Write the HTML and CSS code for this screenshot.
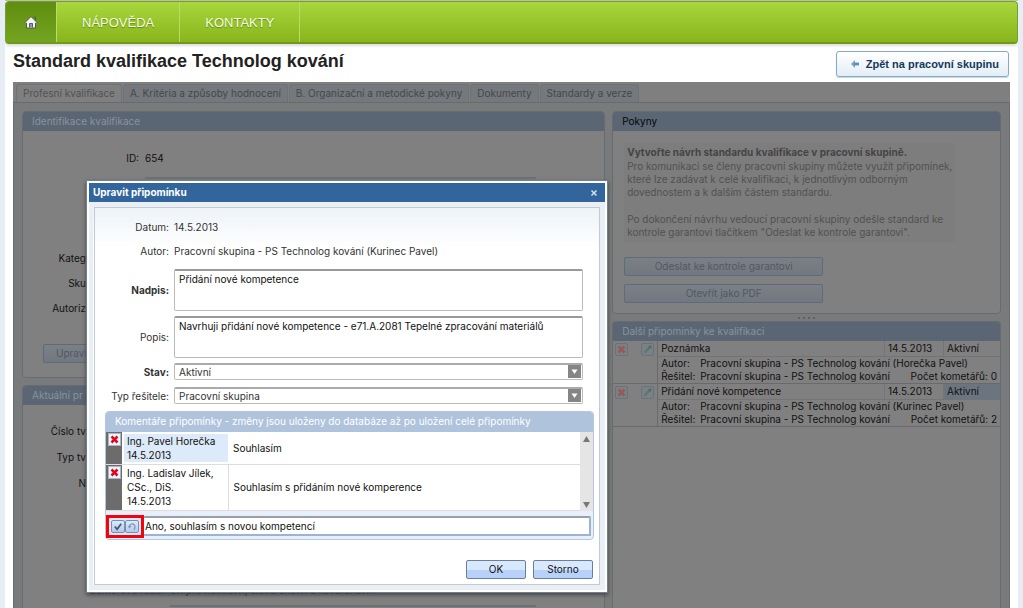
FILE: index.html
```html
<!DOCTYPE html>
<html lang="cs">
<head>
<meta charset="utf-8">
<title>Standard kvalifikace Technolog kování</title>
<link rel="stylesheet" href="styles.css">
</head>
<body>
<div class="page">
  <nav class="nav">
    <a class="home" href="#" aria-label="Domů">
      <svg width="14" height="14" viewBox="0 0 14 14"><path d="M1 7.500 7 1.500l6 6-1 1-.5-.4V13h-9V8.100L2 8.500z" fill="#f3f3f6" stroke="#4d5a4a"/><path d="M10 2h1.500v3" fill="none" stroke="#4d5a4a"/><path d="M5.500 12.500V8.500h3v4" fill="#9298a8" stroke="#565b69"/></svg>
    </a>
    <a class="nav-link" href="#">NÁPOVĚDA</a>
    <a class="nav-link" href="#">KONTAKTY</a>
  </nav>
  <header class="title-row">
    <h1>Standard kvalifikace Technolog kování</h1>
    <button class="back" type="button">
      <svg width="9" height="8" viewBox="0 0 9 8"><path d="M0 4 4 0v2.500h4v3H4V8z" fill="#7ba0c8"/><path d="M3 4h5" stroke="#4a75a6"/></svg>
      Zpět na pracovní skupinu
    </button>
  </header>
  <main class="workspace">
    <div class="tabs">
      <button class="tab active" type="button">Profesní kvalifikace</button>
      <button class="tab" type="button">A. Kritéria a způsoby hodnocení</button>
      <button class="tab" type="button">B. Organizační a metodické pokyny</button>
      <button class="tab" type="button">Dokumenty</button>
      <button class="tab" type="button">Standardy a verze</button>
    </div>
    <div class="columns">
      <div class="left-col">
        <section class="panel ident">
          <h2>Identifikace kvalifikace</h2>
          <div class="ident-id"><span>ID:</span><span>654</span></div>
          <div class="ident-line"></div>
          <div class="side-labels">
            <span>Kateg</span>
            <span>Sku</span>
            <span>Autoriz</span>
          </div>
          <button class="dim-btn edit" type="button">Upravi</button>
        </section>
        <section class="panel work">
          <h2>Aktuální pr</h2>
          <div class="side-labels work-labels">
            <span>Číslo tv</span>
            <span>Typ tv</span>
            <span>N</span>
          </div>
          <div class="sector"><span>Sektorová rada:</span><span>SR pro hutnictví, slévárenství a kovárenství</span></div>
          <div class="sector-line"></div>
        </section>
      </div>
      <div class="right-col">
        <section class="panel guide">
          <h2 class="dark">Pokyny</h2>
          <div class="guide-text">
            <p><strong>Vytvořte návrh standardu kvalifikace v pracovní skupině.</strong></p>
            <p>Pro komunikaci se členy pracovní skupiny můžete využít připomínek,<br>které lze zadávat k celé kvalifikaci, k jednotlivým odborným<br>dovednostem a k dalším částem standardu.</p>
            <p>Po dokončení návrhu vedoucí pracovní skupiny odešle standard ke<br>kontrole garantovi tlačítkem "Odeslat ke kontrole garantovi".</p>
          </div>
          <div class="guide-actions">
            <button class="dim-btn" type="button">Odeslat ke kontrole garantovi</button>
            <button class="dim-btn" type="button">Otevřít jako PDF</button>
          </div>
        </section>
        <div class="grip"><i></i><i></i><i></i><i></i></div>
        <section class="panel notes">
          <h2>Další připomínky ke kvalifikaci</h2>
          <article class="note">
            <div class="note-tools">
              <button class="mini" type="button" aria-label="Smazat"><svg width="11" height="11" viewBox="0 0 11 11"><path d="m2.500 2.500 6 6m0-6-6 6" stroke="#985858" stroke-width="2.500"/></svg></button>
              <button class="mini" type="button" aria-label="Upravit"><svg width="11" height="11" viewBox="0 0 11 11"><path d="m2.500 8.500 5-5" stroke="#4f7b69" stroke-width="2"/><path d="m7 4 2-2" stroke="#4c6b76" stroke-width="2.500"/></svg></button>
            </div>
            <div class="note-body">
              <div class="note-head"><span>Poznámka</span><span class="date">14.5.2013</span><span class="state">Aktivní</span></div>
              <div class="note-line"><span class="key">Autor:</span><span>Pracovní skupina - PS Technolog kování (Horečka Pavel)</span></div>
              <div class="note-line"><span class="key">Řešitel:</span><span>Pracovní skupina - PS Technolog kování</span><span class="count">Počet kometářů: 0</span></div>
            </div>
          </article>
          <article class="note">
            <div class="note-tools">
              <button class="mini" type="button" aria-label="Smazat"><svg width="11" height="11" viewBox="0 0 11 11"><path d="m2.500 2.500 6 6m0-6-6 6" stroke="#985858" stroke-width="2.500"/></svg></button>
              <button class="mini" type="button" aria-label="Upravit"><svg width="11" height="11" viewBox="0 0 11 11"><path d="m2.500 8.500 5-5" stroke="#4f7b69" stroke-width="2"/><path d="m7 4 2-2" stroke="#4c6b76" stroke-width="2.500"/></svg></button>
            </div>
            <div class="note-body">
              <div class="note-head"><span>Přidání nové kompetence</span><span class="date">14.5.2013</span><span class="state selected">Aktivní</span></div>
              <div class="note-line"><span class="key">Autor:</span><span>Pracovní skupina - PS Technolog kování (Kurinec Pavel)</span></div>
              <div class="note-line"><span class="key">Řešitel:</span><span>Pracovní skupina - PS Technolog kování</span><span class="count">Počet kometářů: 2</span></div>
            </div>
          </article>
        </section>
      </div>
    </div>
  </main>
</div>

<div class="dialog" role="dialog" aria-labelledby="dialog-title">
  <div class="dialog-head">
    <h2 id="dialog-title">Upravit připomínku</h2>
    <button class="close" type="button" aria-label="Zavřít"><svg width="8" height="8" viewBox="0 0 8 8"><path d="m1.500 1.500 5 5m0-5-5 5" stroke="#d5e2ef" stroke-width="1.500"/></svg></button>
  </div>
  <form class="dialog-body">
    <div class="facts">
      <span>Datum:</span><span>14.5.2013</span>
      <span>Autor:</span><span>Pracovní skupina - PS Technolog kování (Kurinec Pavel)</span>
    </div>
    <div class="fields">
      <label class="bold" for="subject">Nadpis:</label><textarea id="subject">Přidání nové kompetence</textarea>
      <label for="desc">Popis:</label><textarea id="desc">Navrhuji přidání nové kompetence - e71.A.2081 Tepelné zpracování materiálů</textarea>
      <label class="bold" for="state">Stav:</label>
      <div class="drop"><select id="state"><option>Aktivní</option></select><svg class="arrow" width="13" height="13" viewBox="0 0 13 13"><path d="M0 0h13v13H0z" fill="#858585"/><path d="M3.500 4.500h6L6.500 9z" fill="#fff"/></svg></div>
      <label for="solver">Typ řešitele:</label>
      <div class="drop"><select id="solver"><option>Pracovní skupina</option></select><svg class="arrow" width="13" height="13" viewBox="0 0 13 13"><path d="M0 0h13v13H0z" fill="#858585"/><path d="M3.500 4.500h6L6.500 9z" fill="#fff"/></svg></div>
    </div>
    <section class="comments">
      <h3>Komentáře připomínky - změny jsou uloženy do databáze až po uložení celé připomínky</h3>
      <div class="comment-view">
        <table class="comment-table">
          <tr class="first">
            <td class="del"><button type="button" aria-label="Smazat komentář"><svg width="11" height="11" viewBox="0 0 11 11"><path d="m2.500 2.500 6 6m0-6-6 6" stroke="#e1061c" stroke-width="2.500"/></svg></button></td>
            <td class="who"><div class="hot">Ing. Pavel Horečka<br>14.5.2013</div></td>
            <td class="said">Souhlasím</td>
          </tr>
          <tr class="second">
            <td class="del"><button type="button" aria-label="Smazat komentář"><svg width="11" height="11" viewBox="0 0 11 11"><path d="m2.500 2.500 6 6m0-6-6 6" stroke="#e1061c" stroke-width="2.500"/></svg></button></td>
            <td class="who ruled"><div>Ing. Ladislav Jílek,<br>CSc., DiS.<br>14.5.2013</div></td>
            <td class="said">Souhlasím s přidáním nové komperence</td>
          </tr>
        </table>
        <div class="scroll">
          <svg width="7" height="6" viewBox="0 0 7 6"><path d="M0 6 3.500 0 7 6z" fill="#777"/></svg>
          <svg width="7" height="6" viewBox="0 0 7 6"><path d="M0 0h7L3.500 6z" fill="#777"/></svg>
        </div>
      </div>
      <div class="entry">
        <div class="entry-tools">
          <button type="button" aria-label="Potvrdit"><svg width="10" height="11" viewBox="0 0 11 11"><path d="m2 5.500 2.500 3 4.500-6" fill="none" stroke="#46586f" stroke-width="2"/></svg></button>
          <button type="button" aria-label="Zpět"><svg width="10" height="11" viewBox="0 0 11 11"><path d="M2.500 6C3 3 5 2 7 3s2.500 4 .5 6" fill="none" stroke="#8197b5" stroke-width="1.500"/><path d="M1 5h4L2.500 8z" fill="#8197b5"/></svg></button>
        </div>
        <input class="entry-input" type="text" aria-label="Komentář" value="Ano, souhlasím s novou kompetencí">
      </div>
    </section>
    <div class="actions">
      <button type="button">OK</button>
      <button type="button">Storno</button>
    </div>
  </form>
</div>
</body>
</html>
```
FILE: styles.css
```css
* { box-sizing: border-box; }
html, body { height: 100%; }
body {
  margin: 0;
  overflow: hidden;
  background: #e7edf5;
  font: 10px/13px Inter, "DejaVu Sans", sans-serif;
  color: #111;
}
h1, h2, h3, p { margin: 0; }
button, input, textarea, select { font: inherit; color: inherit; margin: 0; }
svg { display: block; }

.page {
  display: flex;
  flex-direction: column;
  height: 100vh;
  margin: 0 5px;
  background: #fff;
  border-top: 1px solid #b9c0ad;
  overflow: hidden;
}
.nav {
  flex: none;
  display: flex;
  height: 43px;
  border: 1px solid #789f27;
  border-bottom: 2px solid #70981c;
  border-radius: 4px;
  background: linear-gradient(#a9d63c, #88b51c);
  box-shadow: 0 2px 3px #ddd;
  overflow: hidden;
}
.nav a {
  display: flex;
  align-items: center;
  border-right: 1px solid #b9dc62;
  color: #f6ffe0;
  text-decoration: none;
}
.nav .home { width: 51px; padding-left: 18px; background: linear-gradient(#5f8d10, #75a422); }
.nav-link { padding: 0 25px; font: 13px "Liberation Sans", sans-serif; text-shadow: 0 1px 1px #64861d; }

.title-row {
  flex: none;
  display: flex;
  justify-content: space-between;
  height: 38px;
  padding: 7px 9px 0 8px;
}
h1 { font: bold 18px/20px "Liberation Sans", sans-serif; color: #222; }
.back {
  display: flex;
  align-items: center;
  gap: 6px;
  height: 26px;
  padding: 0 9px 0 14px;
  border: 1px solid #86a9c6;
  border-radius: 3px;
  background: linear-gradient(#fff, #e3eef7);
  color: #16395b;
  font: bold 11px "Liberation Sans", sans-serif;
  box-shadow: 0 1px 1px #c8d4de;
}

.workspace {
  flex: 1;
  display: flex;
  flex-direction: column;
  min-height: 0;
  margin: 0 8px;
  background: #7f7f7f;
}
.tabs { flex: none; display: flex; gap: 1px; height: 21px; padding: 2px 3px 0; border-bottom: 1px solid #676b6f; }
.tab {
  padding: 0 6px;
  border: 1px solid #707376;
  border-bottom: 0;
  border-radius: 3px 3px 0 0;
  background: #75787c;
  color: #44484d;
}
.tab.active { background: #7f7f7f; color: #505356; }
.columns {
  flex: 1;
  display: grid;
  grid-template-columns: 3fr 2fr;
  gap: 7px;
  min-height: 0;
  padding: 8px 8px 0;
  background: #797a7b;
  border: solid #6c6e70;
  border-width: 0 1px;
}
.left-col, .right-col { display: flex; flex-direction: column; min-width: 0; }
.left-col { gap: 7px; }
.panel {
  border: 1px solid #686c70;
  border-radius: 4px;
  background: #808080;
  color: #111;
}
.panel h2 {
  height: 19px;
  padding: 3px 9px;
  border-radius: 3px 3px 0 0;
  background: #5a6674;
  color: #8a929b;
  font-size: 10px;
  font-weight: 400;
  line-height: 13px;
}
.panel h2.dark { color: #050505; }
.ident { flex: none; height: 267px; }
.ident-id { display: grid; grid-template-columns: 116px 1fr; gap: 6px; margin-top: 21px; }
.ident-id span:first-child { text-align: right; }
.ident-line { margin: 12px 68px 0 122px; }
.ident-line, .sector-line { border-top: 2px solid #6d7173; }
.side-labels { display: grid; gap: 12px; width: 63px; margin-top: 73px; text-align: right; }
.dim-btn {
  height: 19px;
  border: 1px solid #5c6b7d;
  border-radius: 2px;
  background: linear-gradient(#7b8086, #72787f);
  color: #4f5965;
}
.edit { display: block; width: 120px; margin: 29px 0 0 20px; padding-left: 12px; text-align: left; }
.work { flex: 1; border-bottom: 0; border-radius: 4px 4px 0 0; overflow: hidden; }
.work-labels { margin-top: 20px; gap: 13px; }
.sector { display: grid; grid-template-columns: 141px 1fr; gap: 6px; margin-top: 94px; }
.sector span:first-child { text-align: right; }
.sector-line { margin: 8px 68px 0 147px; }

.guide { height: 203px; flex: none; }
.guide-text { margin: 12px 45px 0 11px; padding: 3px 3px; background: #7d7d7d; color: #515151; white-space: nowrap; }
.guide-text p + p { margin-top: 1px; }
.guide-text p + p + p { margin-top: 14px; }
.guide-text strong { color: #444; }
.guide-actions { display: flex; flex-direction: column; align-items: flex-start; gap: 8px; margin: 15px 0 0 11px; }
.guide-actions .dim-btn { width: 199px; }
.grip { display: flex; justify-content: center; align-items: center; gap: 3px; height: 7px; }
.grip i { width: 2px; height: 2px; background: #606060; }
.notes { flex: 1; border-bottom: 0; border-radius: 4px 4px 0 0; }
.note { display: grid; grid-template-columns: 45px 1fr; height: 43px; border-bottom: 1px solid #686a6c; }
.note-tools { display: flex; justify-content: space-between; align-items: flex-start; padding: 2px 3px 0 2px; border-right: 1px solid #686a6c; }
.mini { padding: 0; border: 1px solid #68727c; border-radius: 2px; background: #7b8085; }
.note-head { display: grid; grid-template-columns: 1fr 59px 57px; height: 16px; border-bottom: 1px solid #727476; line-height: 15px; }
.note-head span { padding-left: 3px; border-left: 1px solid #727476; }
.note-head span:first-child { border-left: 0; }
.note-head .selected { background: #6b7580; }
.note-line { display: flex; padding: 0 3px; white-space: nowrap; }
.note-line .key { width: 39px; }
.note-line .count { margin-left: auto; }

.dialog {
  position: absolute;
  left: 86px;
  top: 180px;
  width: 522px;
  padding: 2px;
  border: 1px solid #6f7f8e;
  background: #fff;
  box-shadow: 0 2px 4px #454545;
}
.dialog-head {
  display: flex;
  align-items: center;
  justify-content: space-between;
  height: 19px;
  padding: 0 5px 0 4px;
  background: #31659c;
  color: #fff;
}
.dialog-head h2 { font-size: 10px; font-weight: bold; line-height: 13px; }
.close { padding: 2px; border: 0; background: transparent; }
.dialog-body {
  padding: 10px 6px 4px 12px;
  border: solid #e9eff4;
  border-width: 6px 5px 5px 4px;
  outline: 1px solid #c2cbd1;
  outline-offset: -6px;
  background: linear-gradient(#eef3f7, #fff 40px);
  color: #333;
}
.facts, .fields { display: grid; grid-template-columns: 64px 1fr; column-gap: 5px; }
.facts { row-gap: 5px; line-height: 19px; }
.facts span:nth-child(odd) { text-align: right; }
.fields {
  row-gap: 5px;
  align-items: center;
  margin-top: 8px;
  padding-right: 11px;
}
.fields > label { text-align: right; white-space: nowrap; }
.fields .bold { font-weight: bold; }
.fields textarea {
  display: block;
  width: 100%;
  height: 42px;
  padding: 2px 4px;
  border: 1px solid #bbb;
  border-top: 2px solid #999;
  border-radius: 2px;
  background: #fff;
  color: #111;
  resize: none;
  overflow: hidden;
}
.drop { position: relative; height: 19px; padding-bottom: 2px; }
.drop select {
  appearance: none;
  display: block;
  width: 100%;
  height: 17px;
  padding: 0 4px;
  border: 1px solid #bbb;
  border-top: 2px solid #aaa;
  border-radius: 2px;
  background: #fff;
}
.arrow { position: absolute; right: 2px; top: 2px; }
.comments { margin-top: 5px; border: 1px solid #b4c7e1; border-radius: 4px; background: #e7f0fa; }
.comments h3 {
  height: 20px;
  padding: 3px 9px;
  border-radius: 3px 3px 0 0;
  background: #afc3dd;
  color: #fff;
  font-size: 10px;
  font-weight: 400;
  line-height: 13px;
  white-space: nowrap;
}
.comment-view { display: flex; color: #111; background: #fff; }
.comment-table { flex: 1; border-collapse: collapse; line-height: 14px; }
.comment-table td { padding: 0; border-bottom: 1px solid #ddd; }
.comment-table .first { height: 32px; }
.comment-table .second { height: 46px; }
.comment-table .del { width: 16px; vertical-align: top; background: #6c6c6c; }
.del button { display: block; margin: 1px 0 0 2px; padding: 0; border: 1px solid #a9b6c5; background: #edf3fb; }
.comment-table .who { width: 106px; padding-left: 2px; }
.who div { padding: 0 3px; white-space: nowrap; }
.who .hot { background: #dceafa; }
.comment-table .ruled { border-right: 1px solid #ddd; }
.comment-table .said { padding-left: 5px; }
.scroll { display: flex; flex-direction: column; justify-content: space-between; align-items: center; width: 13px; padding: 4px 0 3px; background: #e5e5e5; }
.entry { display: flex; align-items: center; padding: 4px 2px 1px 0; }
.entry-tools { display: flex; padding: 2px; border: 3px solid #f10410; background: #dfe9f6; }
.entry-tools button { width: 14px; height: 13px; padding: 0 1px; border: 1px solid #7890ad; border-radius: 2px; background: linear-gradient(#dce9fa, #b2cbed); }
.entry-input {
  flex: 1;
  height: 20px;
  padding: 0 1px;
  border: 2px solid #9eb3d1;
  border-top-color: #999fa8;
  border-left: 0;
  border-radius: 1px;
  background: #fff;
  color: #111;
}
.actions { display: flex; justify-content: flex-end; gap: 7px; padding: 20px 1px 2px; }
.actions button {
  width: 60px;
  height: 19px;
  padding: 0;
  border: 1px solid #697f9b;
  border-radius: 2px;
  background: linear-gradient(#d8e8ff 50%, #b7d1f8 50%);
  color: #111;
}
```
